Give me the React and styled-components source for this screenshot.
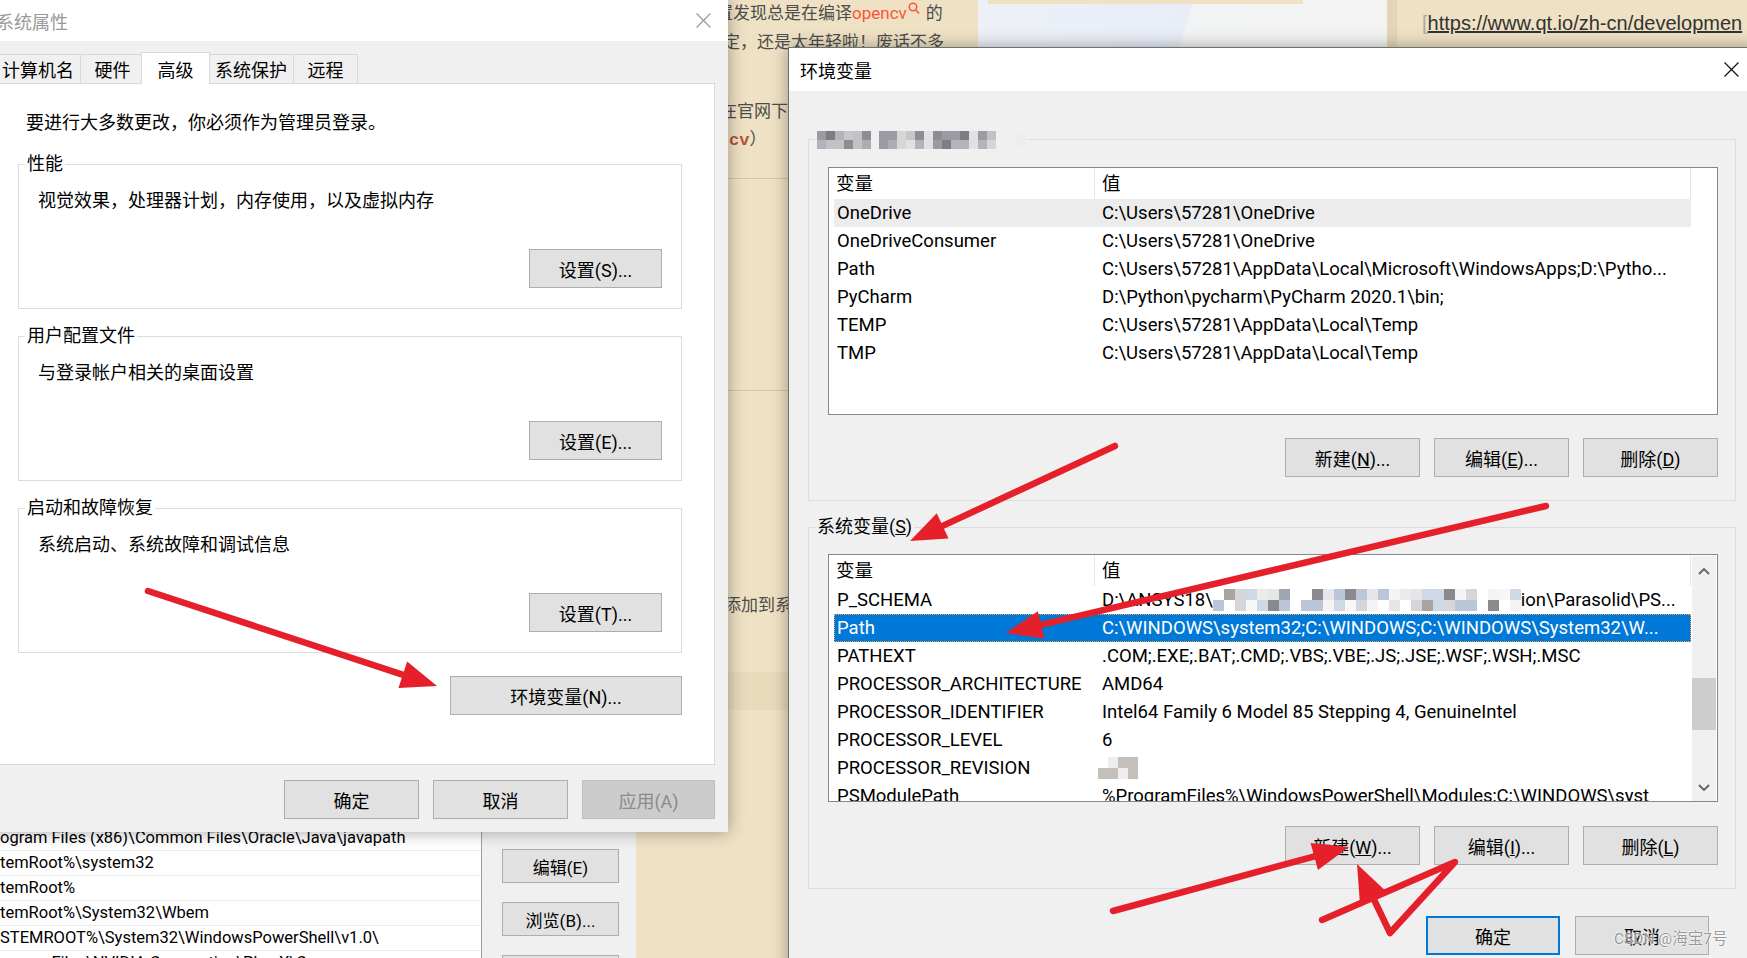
import React from 'react';
import styled, { createGlobalStyle } from 'styled-components';

const UI_FONT = `Roboto, "Noto Sans CJK SC", sans-serif`;
const BEIGE = '#efe1c4';
const RED = '#e5202a';

const GlobalStyle = createGlobalStyle`
  html, body {
    margin: 0;
    padding: 0;
    overflow: hidden;
  }
  body {
    font-family: ${UI_FONT};
  }
`;

// 데이터
const userVars = [
  ['OneDrive', 'C:\\Users\\57281\\OneDrive'],
  ['OneDriveConsumer', 'C:\\Users\\57281\\OneDrive'],
  ['Path', 'C:\\Users\\57281\\AppData\\Local\\Microsoft\\WindowsApps;D:\\Pytho...'],
  ['PyCharm', 'D:\\Python\\pycharm\\PyCharm 2020.1\\bin;'],
  ['TEMP', 'C:\\Users\\57281\\AppData\\Local\\Temp'],
  ['TMP', 'C:\\Users\\57281\\AppData\\Local\\Temp'],
];

const bgPaths = [
  'ogram Files (x86)\\Common Files\\Oracle\\Java\\javapath',
  'temRoot%\\system32',
  'temRoot%',
  'temRoot%\\System32\\Wbem',
  'STEMROOT%\\System32\\WindowsPowerShell\\v1.0\\',
  'ogram Files\\NVIDIA Corporation\\PhysX\\Common',
];

const arrows = [
  [[148, 591], [437, 686]],
  [[1115, 446], [910, 541]],
  [[1546, 506], [1006, 633]],
  [[1113, 911], [1349, 847]],
  [[1322, 920], [1455, 862], [1390, 933], [1357, 864]],
];

const GRAY_PALETTE = ['#9c9aa2', '#c9c5c9', '#b3b4bb', '#d8d5d9', '#8f8c93', '#a9aeb0', '#bfc3c6', '#e2e0e2', '#7f7d84'];
const LIGHT_PALETTE = ['#ffffff', '#f4f4f4', '#e6e6e8', '#d4d6da', '#b9c7d8', '#cfd9e6', '#9ea6b2', '#8a8a8e', '#ecebea', '#a9a4a0', '#ffffff', '#f7f7f7'];

export default function App() {
  return (
    <>
      <GlobalStyle />
      <Desktop>
        <BlogPane>
          <BlogLine $indent={26}>
            置发现总是在编译<Accent>opencv</Accent>
            <SearchIcon />
            的
          </BlogLine>
          <BlogLine $indent={33} $top={3}>定，还是太年轻啦！废话不多</BlogLine>
          <BlogLine $indent={30} $top={43}>在官网下载</BlogLine>
          <BlogLine $indent={39} $top={2}>
            <CodeWord>cv</CodeWord>）
          </BlogLine>
          <BlogRule $top={26} />
          <BlogRule $top={211} />
          <BlogLine $indent={34} $top={201}>添加到系统</BlogLine>
          <BlogBand />
        </BlogPane>

        <PictureStrip>
          <PictureBar />
        </PictureStrip>

        <LinkPane>
          <Bracket>[</Bracket>
          <LinkText>https://www.qt.io/zh-cn/developmen</LinkText>
        </LinkPane>

        <BgEditor>
          <BgList>
            {bgPaths.map((p) => (
              <BgRow key={p}>{p}</BgRow>
            ))}
          </BgList>
          <BgButtons>
            <Button $w={117} $h={34} $size={17}>编辑(E)</Button>
            <Button $w={117} $h={34} $size={17}>浏览(B)...</Button>
            <Button $w={117} $h={34} $size={17}>删除(D)</Button>
          </BgButtons>
        </BgEditor>

        <SystemProperties />
        <EnvironmentDialog />

        <ArrowLayer width="1747" height="958" viewBox="0 0 1747 958">
          {arrows.map((pts, i) => (
            <Arrow key={i} pts={pts} />
          ))}
        </ArrowLayer>

        <Watermark>CSDN @海宝7号</Watermark>
      </Desktop>
    </>
  );
}

function SystemProperties() {
  const tabs = ['计算机名', '硬件', '高级', '系统保护', '远程'];
  const groups = [
    { title: '性能', desc: '视觉效果，处理器计划，内存使用，以及虚拟内存', btn: '设置(S)...', mt: 15 },
    { title: '用户配置文件', desc: '与登录帐户相关的桌面设置', btn: '设置(E)...', mt: 14 },
    { title: '启动和故障恢复', desc: '系统启动、系统故障和调试信息', btn: '设置(T)...', mt: 14 },
  ];
  return (
    <Window $x={-18} $y={0} $w={746} $h={832}>
      <TitleBar $h={41} $pad={14}>
        <Title>系统属性</Title>
        <CloseBtn $w={50}>
          <CloseIcon size={15} color="#999" />
        </CloseBtn>
      </TitleBar>
      <SysBody>
        <TabRow>
          {tabs.map((t) => (
            <Tab key={t} $active={t === '高级'}>
              {t}
            </Tab>
          ))}
        </TabRow>
        <TabPanel>
          <Intro>要进行大多数更改，你必须作为管理员登录。</Intro>
          {groups.map((g) => (
            <Group key={g.title} $mt={g.mt} $pl={19} $pr={19} $pb={20}>
              <Legend>{g.title}</Legend>
              <GroupDesc>{g.desc}</GroupDesc>
              <ButtonRow $mt={35}>
                <Button $w={133}>{g.btn}</Button>
              </ButtonRow>
            </Group>
          ))}
          <ButtonRow $mt={23}>
            <Button $w={232}>环境变量(N)...</Button>
          </ButtonRow>
        </TabPanel>
        <ButtonRow $mt={15} $gap={14}>
          <Button $w={135}>确定</Button>
          <Button $w={135}>取消</Button>
          <Button $w={133} disabled>
            应用(A)
          </Button>
        </ButtonRow>
      </SysBody>
    </Window>
  );
}

function EnvironmentDialog() {
  return (
    <Window $x={788} $y={47} $w={972} $h={930} $border="#707070">
      <TitleBar $h={43} $pad={11} $active>
        <Title>环境变量</Title>
        <CloseBtn $w={56}>
          <CloseIcon size={15} color="#111" />
        </CloseBtn>
      </TitleBar>
      <EnvBody>
        <Group $mt={0} $pl={19} $pr={17} $pb={23}>
          <Legend>
            <Mosaic cols={6} rows={2} cell={9} palette={GRAY_PALETTE} seed={7} />
            <MosaicGap $w={8} />
            <Mosaic cols={13} rows={2} cell={9} palette={GRAY_PALETTE} seed={31} />
            <MosaicGap $w={20} />
            <Mosaic cols={1} rows={1} cell={10} palette={['#ececef']} seed={3} />
          </Legend>
          <ListView $mt={15}>
            <Table>
              <HeaderRow>
                <HeadCell $w={261}>变量</HeadCell>
                <HeadCell $pl={7}>值</HeadCell>
              </HeaderRow>
              {userVars.map(([k, v], i) => (
                <Row key={k} $hover={i === 0}>
                  <Cell $w={261}>{k}</Cell>
                  <Cell $pl={7}>{v}</Cell>
                </Row>
              ))}
            </Table>
            <ScrollArea />
          </ListView>
          <ButtonRow $mt={23} $gap={14}>
            <Button $w={135}>
              新建(<u>N</u>)...
            </Button>
            <Button $w={135}>
              编辑(<u>E</u>)...
            </Button>
            <Button $w={135}>
              删除(<u>D</u>)
            </Button>
          </ButtonRow>
        </Group>

        <Group $mt={13} $pl={19} $pr={17} $pb={23}>
          <Legend>
            系统变量(<u>S</u>)
          </Legend>
          <ListView $mt={14}>
            <Table>
              <HeaderRow>
                <HeadCell $w={261}>变量</HeadCell>
                <HeadCell $pl={7}>值</HeadCell>
              </HeaderRow>
              <Row>
                <Cell $w={261}>P_SCHEMA</Cell>
                <Cell $pl={7}>
                  {'D:\\ANSYS18\\'}
                  <Mosaic cols={28} rows={2} cell={11} palette={LIGHT_PALETTE} seed={97} />
                  {'ion\\Parasolid\\PS...'}
                </Cell>
              </Row>
              <Row $selected>
                <Cell $w={261}>Path</Cell>
                <Cell $pl={7}>{'C:\\WINDOWS\\system32;C:\\WINDOWS;C:\\WINDOWS\\System32\\W...'}</Cell>
              </Row>
              <Row>
                <Cell $w={261}>PATHEXT</Cell>
                <Cell $pl={7}>.COM;.EXE;.BAT;.CMD;.VBS;.VBE;.JS;.JSE;.WSF;.WSH;.MSC</Cell>
              </Row>
              <Row>
                <Cell $w={261}>PROCESSOR_ARCHITECTURE</Cell>
                <Cell $pl={7}>AMD64</Cell>
              </Row>
              <Row>
                <Cell $w={261}>PROCESSOR_IDENTIFIER</Cell>
                <Cell $pl={7}>Intel64 Family 6 Model 85 Stepping 4, GenuineIntel</Cell>
              </Row>
              <Row>
                <Cell $w={261}>PROCESSOR_LEVEL</Cell>
                <Cell $pl={7}>6</Cell>
              </Row>
              <Row>
                <Cell $w={261}>PROCESSOR_REVISION</Cell>
                <Cell $pl={3}>
                  <Mosaic cols={4} rows={2} cell={10} cellH={11} palette={['#ffffff', '#d9d9db', '#a3a3a6', '#eeeeee', '#c4bfb9']} seed={13} />
                </Cell>
              </Row>
              <Row>
                <Cell $w={261}>PSModulePath</Cell>
                <Cell $pl={7}>{'%ProgramFiles%\\WindowsPowerShell\\Modules;C:\\WINDOWS\\syst'}</Cell>
              </Row>
            </Table>
            <ScrollArea>
              <ScrollTrack>
                <ScrollArrow $h={30}>
                  <Chevron up />
                </ScrollArrow>
                <ScrollThumb />
                <ScrollArrow $h={27} $end>
                  <Chevron />
                </ScrollArrow>
              </ScrollTrack>
            </ScrollArea>
          </ListView>
          <ButtonRow $mt={24} $gap={14}>
            <Button $w={135}>
              新建(<u>W</u>)...
            </Button>
            <Button $w={135}>
              编辑(<u>I</u>)...
            </Button>
            <Button $w={135}>
              删除(<u>L</u>)
            </Button>
          </ButtonRow>
        </Group>

        <ButtonRow $mt={27} $gap={15} $mr={27}>
          <Button $w={134} $focus>
            确定
          </Button>
          <Button $w={134}>取消</Button>
        </ButtonRow>
      </EnvBody>
    </Window>
  );
}

function Mosaic({ cols, rows, cell, cellH, palette, seed }) {
  let s = seed;
  const next = () => {
    s = (s * 16807) % 2147483647;
    return s / 2147483647;
  };
  const h = cellH || cell;
  const rects = [];
  for (let r = 0; r < rows; r++) {
    for (let c = 0; c < cols; c++) {
      rects.push(
        <rect
          key={r * cols + c}
          x={c * cell}
          y={r * h}
          width={cell}
          height={h}
          fill={palette[Math.floor(next() * palette.length)]}
        />
      );
    }
  }
  return (
    <MosaicSvg width={cols * cell} height={rows * h}>
      {rects}
    </MosaicSvg>
  );
}

function Arrow({ pts, len = 36, half = 14 }) {
  const [x2, y2] = pts[pts.length - 1];
  const [x1, y1] = pts[pts.length - 2];
  const d = Math.hypot(x2 - x1, y2 - y1);
  const ux = (x2 - x1) / d;
  const uy = (y2 - y1) / d;
  const bx = x2 - ux * len;
  const by = y2 - uy * len;
  const head = `${x2},${y2} ${bx - uy * half},${by + ux * half} ${bx + uy * half},${by - ux * half}`;
  const line = [...pts.slice(0, -1), [bx + ux * 6, by + uy * 6]].map((p) => p.join(',')).join(' ');
  return (
    <g>
      <polyline points={line} fill="none" stroke={RED} strokeWidth="6.5" strokeLinecap="round" strokeLinejoin="round" />
      <polygon points={head} fill={RED} />
    </g>
  );
}

function CloseIcon({ size, color }) {
  return (
    <svg width={size} height={size} viewBox="0 0 14 14">
      <path d="M0.5 0.5L13.5 13.5M13.5 0.5L0.5 13.5" stroke={color} strokeWidth="1.1" fill="none" />
    </svg>
  );
}

function Chevron({ up }) {
  return (
    <svg width="12" height="8" viewBox="0 0 12 8">
      <polyline
        points={up ? '1,7 6,2 11,7' : '1,1 6,6 11,1'}
        fill="none"
        stroke="#606060"
        strokeWidth="1.8"
      />
    </svg>
  );
}

function SearchIcon() {
  return (
    <SearchSvg width="12" height="13" viewBox="0 0 12 13">
      <circle cx="5" cy="5" r="3.8" fill="none" stroke="#fc5531" strokeWidth="1.5" />
      <path d="M7.8 8L11 11.5" stroke="#fc5531" strokeWidth="1.6" />
    </SearchSvg>
  );
}

const Desktop = styled.div`
  position: relative;
  width: 1747px;
  height: 958px;
  overflow: hidden;
  background: ${BEIGE};
  font-family: ${UI_FONT};
`;

/* 배경 블로그 */
const BlogPane = styled.div`
  position: absolute;
  left: 690px;
  top: 0;
  width: 288px;
  height: 958px;
  background: ${BEIGE};
  color: #4d4d4d;
  font-size: 17px;
  display: flex;
  flex-direction: column;
`;

const BlogLine = styled.div`
  height: 26px;
  line-height: 26px;
  margin-top: ${(p) => p.$top || 0}px;
  padding-left: ${(p) => p.$indent}px;
  white-space: nowrap;
`;

const Accent = styled.span`
  color: #fc5531;
`;

const SearchSvg = styled.svg`
  margin: 0 6px 0 1px;
  vertical-align: 4px;
`;

const CodeWord = styled.span`
  color: #b5523b;
  font-weight: bold;
  font-family: "Liberation Mono", monospace;
`;

const BlogRule = styled.div`
  height: 1px;
  margin-top: ${(p) => p.$top}px;
  background: #d6c6a6;
`;

const BlogBand = styled.div`
  height: 38px;
  margin-top: 54px;
  background: #e8dabb;
`;

const PictureStrip = styled.div`
  position: absolute;
  left: 978px;
  top: 0;
  width: 409px;
  height: 60px;
  background: linear-gradient(105deg, #edf0f6 0%, #e8edf7 50%, #f2f3f4 51%, #f3f3f2 100%);
`;

const PictureBar = styled.div`
  width: 315px;
  height: 4px;
  margin-left: 10px;
  background: ${BEIGE};
`;

const LinkPane = styled.div`
  position: absolute;
  left: 1387px;
  top: 0;
  width: 360px;
  height: 60px;
  box-sizing: border-box;
  border-left: 10px solid #e4d5b6;
  background: ${BEIGE};
  padding: 10px 0 0 25px;
  display: flex;
  align-items: flex-start;
  white-space: nowrap;
  overflow: hidden;
  font-family: "Liberation Sans", Arial, sans-serif;
  font-size: 20px;
  line-height: 26px;
`;

const Bracket = styled.span`
  color: #aaa;
`;

const LinkText = styled.span`
  color: #333;
  text-decoration: underline;
`;

/* 뒤쪽 편집기 */
const BgEditor = styled.div`
  position: absolute;
  left: 0;
  top: 800px;
  width: 636px;
  height: 158px;
  display: flex;
  font-size: 16.5px;
`;

const BgList = styled.div`
  width: 482px;
  box-sizing: border-box;
  padding-top: 26px;
  background: #fff;
  border-right: 1px solid #a0a0a0;
`;

const BgRow = styled.div`
  height: 24px;
  line-height: 24px;
  border-bottom: 1px solid #ececec;
  white-space: nowrap;
  overflow: hidden;
`;

const BgButtons = styled.div`
  flex: 1;
  background: #f0f0f0;
  padding: 49px 0 0 20px;
  display: flex;
  flex-direction: column;
  gap: 19px;
`;

/* 창 */
const Window = styled.div`
  position: absolute;
  left: ${(p) => p.$x}px;
  top: ${(p) => p.$y}px;
  width: ${(p) => p.$w}px;
  height: ${(p) => p.$h}px;
  box-sizing: border-box;
  border: ${(p) => (p.$border ? `1px solid ${p.$border}` : 'none')};
  display: flex;
  flex-direction: column;
  background: #f0f0f0;
  box-shadow: 0 0 16px rgba(0, 0, 0, 0.35);
  color: #000;
  font-size: 18px;
`;

const TitleBar = styled.div`
  flex: none;
  height: ${(p) => p.$h}px;
  padding-left: ${(p) => p.$pad}px;
  display: flex;
  align-items: center;
  background: #fff;
  color: ${(p) => (p.$active ? '#000' : '#999')};
  font-size: 18px;
  white-space: nowrap;
`;

const Title = styled.span`
  flex: 1;
`;

const CloseBtn = styled.div`
  width: ${(p) => p.$w}px;
  height: 100%;
  display: flex;
  align-items: center;
  justify-content: center;
`;

const SysBody = styled.div`
  flex: 1;
  display: flex;
  flex-direction: column;
  padding: 11px 13px 13px 12px;
  min-height: 0;
`;

const TabRow = styled.div`
  display: flex;
  align-items: flex-end;
  padding-left: 1px;
  height: 31px;
`;

const Tab = styled.div`
  box-sizing: border-box;
  height: ${(p) => (p.$active ? 32 : 29)}px;
  min-width: ${(p) => (p.$active ? 69 : 65)}px;
  padding: 0 6px;
  margin: ${(p) => (p.$active ? '0 -2px -1px -3px' : '0 -1px 0 0')};
  display: flex;
  align-items: center;
  justify-content: center;
  border: 1px solid #d9d9d9;
  border-bottom: none;
  background: ${(p) => (p.$active ? '#fff' : '#f0f0f0')};
  position: relative;
  z-index: ${(p) => (p.$active ? 3 : 1)};
  white-space: nowrap;
`;

const TabPanel = styled.div`
  flex: 1;
  position: relative;
  z-index: 2;
  display: flex;
  flex-direction: column;
  background: #fff;
  border: 1px solid #d9d9d9;
  padding: 26px 32px 0 23px;
`;

const Intro = styled.div`
  line-height: 26px;
  margin-left: 8px;
`;

const Group = styled.fieldset`
  margin: ${(p) => p.$mt}px 0 0;
  min-width: 0;
  padding: 0 ${(p) => p.$pr}px ${(p) => p.$pb}px ${(p) => p.$pl}px;
  border: 1px solid #dcdcdc;
  display: flex;
  flex-direction: column;
`;

const Legend = styled.legend`
  margin-left: -13px;
  padding: 0 2px;
  line-height: 26px;
  font-size: 18px;
  white-space: nowrap;
`;

const GroupDesc = styled.div`
  line-height: 26px;
  margin-top: 11px;
`;

const ButtonRow = styled.div`
  display: flex;
  justify-content: flex-end;
  gap: ${(p) => p.$gap || 0}px;
  margin-top: ${(p) => p.$mt}px;
  margin-right: ${(p) => p.$mr || 0}px;
`;

const Button = styled.button`
  flex: none;
  width: ${(p) => p.$w}px;
  height: ${(p) => p.$h || 39}px;
  box-sizing: border-box;
  padding: 0;
  border-radius: 0;
  border: ${(p) =>
    p.$focus ? '2px solid #0078d7' : `1px solid ${p.disabled ? '#bfbfbf' : '#adadad'}`};
  background: ${(p) => (p.disabled ? '#cccccc' : '#e1e1e1')};
  color: ${(p) => (p.disabled ? '#8a8a8a' : '#000')};
  font-family: ${UI_FONT};
  font-size: ${(p) => p.$size || 18}px;
  white-space: nowrap;
`;

const EnvBody = styled.div`
  flex: 1;
  display: flex;
  flex-direction: column;
  padding: 35px 23px 0 19px;
`;

const MosaicSvg = styled.svg`
  display: inline-block;
  vertical-align: middle;
`;

const MosaicGap = styled.span`
  display: inline-block;
  width: ${(p) => p.$w}px;
`;

const ListView = styled.div`
  margin-top: ${(p) => p.$mt}px;
  height: 248px;
  box-sizing: border-box;
  border: 1px solid #828790;
  background: #fff;
  display: flex;
  overflow: hidden;
`;

const Table = styled.div`
  flex: 1;
  min-width: 0;
  margin-left: 5px;
  display: flex;
  flex-direction: column;
  font-size: 18.5px;
`;

const HeaderRow = styled.div`
  flex: none;
  height: 31px;
  display: flex;
`;

const HeadCell = styled.div`
  box-sizing: border-box;
  width: ${(p) => (p.$w ? `${p.$w}px` : 'auto')};
  flex: ${(p) => (p.$w ? 'none' : 1)};
  padding-left: ${(p) => p.$pl || 2}px;
  padding-bottom: 3px;
  display: flex;
  align-items: center;
  border-right: 1px solid #e5e5e5;
`;

const Row = styled.div`
  flex: none;
  height: 28px;
  display: flex;
  align-items: center;
  box-sizing: border-box;
  background: ${(p) => (p.$selected ? '#0078d7' : p.$hover ? '#ececec' : 'transparent')};
  color: ${(p) => (p.$selected ? '#fff' : '#000')};
  outline: ${(p) => (p.$selected ? '1px dotted #f0a848' : 'none')};
  outline-offset: -1px;
`;

const Cell = styled.div`
  box-sizing: border-box;
  width: ${(p) => (p.$w ? `${p.$w}px` : 'auto')};
  flex: ${(p) => (p.$w ? 'none' : 1)};
  min-width: 0;
  padding-left: ${(p) => p.$pl || 3}px;
  white-space: nowrap;
  overflow: hidden;
  display: flex;
  align-items: center;
`;

const ScrollArea = styled.div`
  flex: none;
  width: 26px;
  box-sizing: border-box;
  padding: 1px 1px 0 1px;
  display: flex;
`;

const ScrollTrack = styled.div`
  flex: 1;
  background: #f0f0f0;
  display: flex;
  flex-direction: column;
`;

const ScrollArrow = styled.div`
  flex: none;
  height: ${(p) => p.$h}px;
  margin-top: ${(p) => (p.$end ? 'auto' : 0)};
  display: flex;
  align-items: center;
  justify-content: center;
`;

const ScrollThumb = styled.div`
  height: 52px;
  margin-top: 92px;
  background: #cdcdcd;
`;

const ArrowLayer = styled.svg`
  position: absolute;
  left: 0;
  top: 0;
  pointer-events: none;
  z-index: 10;
`;

const Watermark = styled.div`
  position: absolute;
  left: 1614px;
  top: 928px;
  z-index: 11;
  font-size: 15.5px;
  line-height: 22px;
  color: rgba(120, 120, 120, 0.75);
  text-shadow: 0 0 2px #fff, 0 0 2px #fff;
  white-space: nowrap;
`;
